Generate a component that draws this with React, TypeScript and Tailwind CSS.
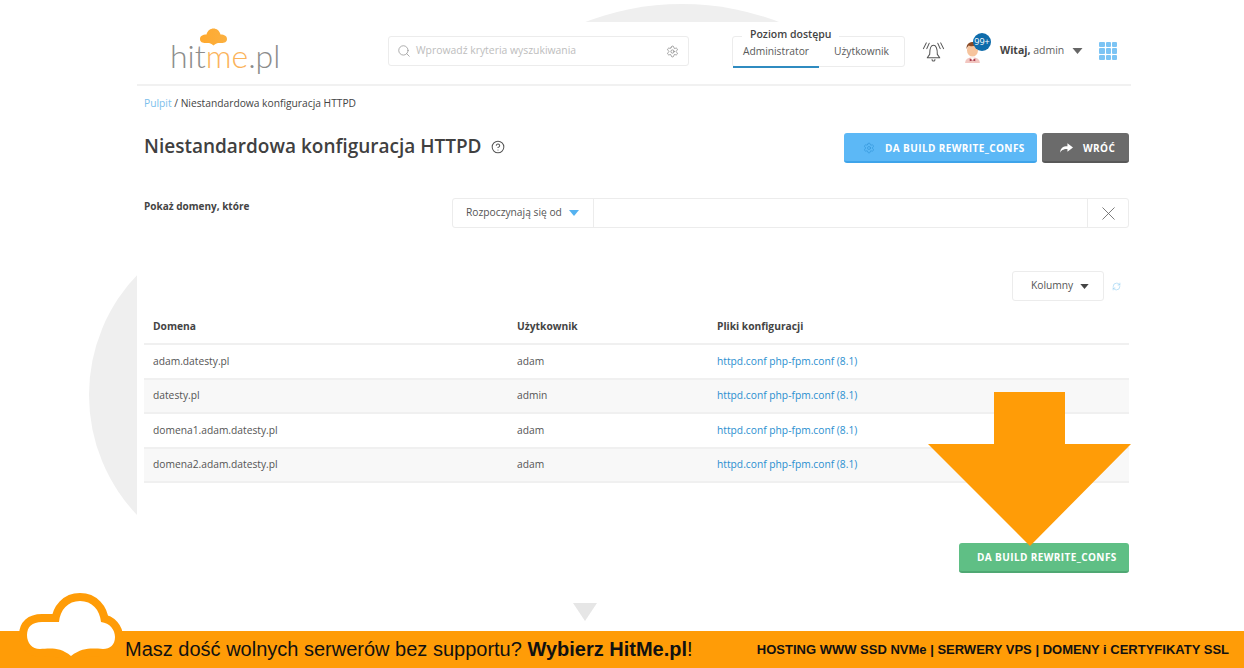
import { Search, Settings, X, RefreshCw, HelpCircle } from "lucide-react";

const rows = [
  { domain: "adam.datesty.pl", user: "adam" },
  { domain: "datesty.pl", user: "admin" },
  { domain: "domena1.adam.datesty.pl", user: "adam" },
  { domain: "domena2.adam.datesty.pl", user: "adam" },
];

function Caret({ className }: { className: string }) {
  return (
    <svg viewBox="0 0 10 6" className={className} fill="currentColor">
      <path d="M0 0h10L5 6z" />
    </svg>
  );
}

function Logo() {
  return (
    <div className="relative ml-[35px] w-[112px] h-[50px]">
      <svg viewBox="0 0 28 18" className="absolute left-[27px] top-[2px] w-[29px] h-[18px]">
        <defs>
          <linearGradient id="lg" x1="0" x2="1">
            <stop offset="0" stopColor="#ffa92e" />
            <stop offset="1" stopColor="#fbb040" />
          </linearGradient>
        </defs>
        <path
          d="M0.5 11C0.5 8 3 6.500 7 6.500C8 2.500 11 0.500 14 0.500C17 0.500 20 2.500 21 6.500C25 6.500 27.500 8 27.500 11C27.500 14 25 15 22 15C19 15 17 14.500 14 17.500C11 14.500 9 15 6 15C3 15 0.500 14 0.500 11Z"
          fill="url(#lg)"
        />
      </svg>
      <div className="absolute left-[-2px] top-[10px] text-[32px] leading-[40px] font-['Lato',sans-serif] font-light text-[#8c8c8c] whitespace-nowrap">
        hit<span className="text-[#fbb35a]">me</span>.pl
      </div>
    </div>
  );
}

function Bell() {
  return (
    <svg viewBox="0 0 24 24" className="ml-[17px] w-[23px] h-[23px] text-[#555555]" fill="none" stroke="currentColor" strokeWidth="1.1" strokeLinecap="round" strokeLinejoin="round">
      <path d="M8 15C8 9 9 5.500 12 5.500C15 5.500 16 9 16 15L18.500 18.500H5.500Z" />
      <path d="M10.500 20.500a1.500 1.500 0 0 0 3 0" />
      <path d="M7.500 3.500L5 9" />
      <path d="M4.500 3L1.500 9" />
      <path d="M16.500 3.500L19 9" />
      <path d="M19.500 3L22.500 9" />
    </svg>
  );
}

function Avatar() {
  return (
    <div className="relative w-[22px] h-[28px]">
      <svg viewBox="0 0 20 24" className="absolute left-[1px] top-[4px] w-[19px] h-[22px]">
        <path d="M2 24c0-4 3-6 8-6s8 2 8 6z" fill="#f2c6c0" />
        <path d="M8 18h4l-2 3z" fill="#fff" />
        <path d="M7 19l3 2 3-2 0 3-3-1-3 1z" fill="#a6364a" />
        <ellipse cx="10" cy="10" rx="6" ry="7" fill="#f6c49d" />
        <path d="M3.500 9C3 3 7 1 11 1c4 0 6 3 5.500 8-1-2-2-4-3.500-4-2 1-6 1-7 0-1 1-2 2-2.500 4z" fill="#8a4a24" />
      </svg>
      <div className="absolute left-[11px] top-[-4px] w-[18px] h-[18px] rounded-full bg-[#0f6cab] text-white text-[9px] leading-[18px] text-center">
        99+
      </div>
    </div>
  );
}

function ConfigButton({ bg, edge, children, className }: { bg: string; edge: string; children: React.ReactNode; className: string }) {
  return (
    <button className={`${bg} ${edge} ${className} h-[30px] pt-[2px] rounded-[3px] border-b-2 text-white text-[10px] font-bold tracking-[0.4px] flex items-center`}>
      {children}
    </button>
  );
}

export default function App() {
  return (
    <div className="relative w-[1244px] h-[668px] overflow-hidden bg-white flex flex-col font-['Open_Sans',sans-serif] text-[#4a4a4a]">
      <div className="absolute left-[412px] top-[4px] w-[540px] h-[540px] rounded-full bg-[#efefef]" />
      <div className="absolute left-[89px] top-[221px] w-[348px] h-[348px] rounded-full bg-[#efefef]" />

      <main className="relative ml-[137px] mt-[22px] w-[994px] h-[578px] bg-white">
        <header className="h-[64px] pb-[4px] border-b-2 border-[#f1f1f1] flex items-center">
          <Logo />
          <div className="ml-[104px] w-[301px] h-[30px] rounded-[3px] border border-[#ececec] flex items-center px-[8px] text-[#a9a9a9]">
            <Search className="w-[14px] h-[14px] text-[#8f8f8f]" strokeWidth={1.25} />
            <span className="ml-[5px] text-[10.400px] flex-1 text-[#bdbdbd]">Wprowadź kryteria wyszukiwania</span>
            <Settings className="w-[13px] h-[13px] mr-[1px] text-[#777777]" strokeWidth={1.25} />
          </div>
          <div className="relative ml-[43px] w-[173px] h-[31px] mt-[1px] rounded-[3px] border border-[#ececec] flex text-[10.250px] text-[#5a5a5a]">
            <div className="absolute left-[9px] top-[-11px] px-[8px] bg-white text-[10.500px] leading-[16px] font-semibold text-[#444444]">
              Poziom dostępu
            </div>
            <div className="w-[86px] h-[31px] border-b-2 border-[#2f8bc0] flex items-center justify-center pt-[1px]">Administrator</div>
            <div className="flex-1 flex items-center justify-center pt-[1px]">Użytkownik</div>
          </div>
          <Bell />
          <div className="ml-[17px]">
            <Avatar />
          </div>
          <div className="ml-[16px] text-[10.500px] whitespace-nowrap text-[#5f5f5f]">
            <b className="text-[#444444]">Witaj,</b> admin
          </div>
          <Caret className="ml-[8px] w-[11px] h-[6px] text-[#666666]" />
          <div className="ml-[16px] w-[18px] h-[18px] grid grid-cols-3 gap-[1px]">
            {Array.from({ length: 9 }).map((_, i) => (
              <div key={i} className="bg-[#7cc4f4] rounded-[1px]" />
            ))}
          </div>
        </header>

        <div className="pl-[7px] pr-[2px]">
          <div className="mt-[9px] text-[10.250px] leading-[16px] text-[#444444]">
            <span className="text-[#7cc0ec]">Pulpit</span> / Niestandardowa konfiguracja HTTPD
          </div>

          <div className="mt-[22px] h-[30px] flex items-center">
            <h1 className="text-[19px] font-semibold text-[#404040] mt-[-4px] whitespace-nowrap">Niestandardowa konfiguracja HTTPD</h1>
            <HelpCircle className="ml-[9px] mt-[-2px] w-[14px] h-[14px] text-[#555555]" strokeWidth={1.75} />
            <ConfigButton bg="bg-[#5cb8f6]" edge="border-[#3fa4ea]" className="ml-auto w-[193px] pl-[19px]">
              <Settings className="w-[12px] h-[12px] mr-[10px] text-[#2f93d8]" strokeWidth={1.25} />
              DA BUILD REWRITE_CONFS
            </ConfigButton>
            <ConfigButton bg="bg-[#6b6b6b]" edge="border-[#585858]" className="ml-[5px] w-[87px] pl-[18px]">
              <svg viewBox="0 0 14 10" className="w-[13px] h-[10px] mr-[10px]" fill="white">
                <path d="M8 0l6 4.500-6 4.500V6C5 6 2 6.500 0 10 0.500 5 3 3 8 3z" />
              </svg>
              WRÓĆ
            </ConfigButton>
          </div>

          <div className="mt-[35px] h-[30px] flex items-start">
            <div className="mt-[1px] w-[308px] text-[10px] font-bold text-[#444444]">Pokaż domeny, które</div>
            <div className="flex-1 h-[30px] rounded-[3px] border border-[#ececec] flex text-[10.250px] text-[#555555]">
              <div className="w-[141px] border-r border-[#ececec] flex items-center pl-[13px]">
                Rozpoczynają się od
                <Caret className="ml-[7px] w-[10px] h-[6px] text-[#55b2f0]" />
              </div>
              <div className="flex-1" />
              <div className="w-[41px] border-l border-[#ececec] flex items-center justify-center">
                <X className="w-[23px] h-[23px] text-[#666666]" strokeWidth={0.9} />
              </div>
            </div>
          </div>

          <div className="mt-[43px] flex items-center justify-end">
            <div className="w-[92px] h-[30px] rounded-[3px] border border-[#ececec] flex items-center pl-[18px] text-[10.250px] text-[#555555]">
              Kolumny
              <Caret className="ml-[7px] w-[9px] h-[5px] text-[#444444]" />
            </div>
            <RefreshCw className="ml-[8px] mr-[8px] w-[9px] h-[9px] text-[#8ccbf0]" strokeWidth={1.5} />
          </div>

          <table className="mt-[9px] w-[985px] table-fixed text-[10.250px] text-[#555555]">
            <thead>
              <tr className="h-[34px] border-b-2 border-[#f0f0f0] text-left font-bold text-[#444444]">
                <th className="w-[364px] pl-[9px] font-bold">Domena</th>
                <th className="w-[200px] pl-[9px] font-bold">Użytkownik</th>
                <th className="pl-[9px] font-bold">Pliki konfiguracji</th>
              </tr>
            </thead>
            <tbody>
              {rows.map((row, i) => (
                <tr key={row.domain} className={`h-[34.500px] border-b-2 border-[#f0f0f0] ${i % 2 === 1 ? "bg-[#f8f8f8]" : ""}`}>
                  <td className="pl-[9px]">{row.domain}</td>
                  <td className="pl-[9px]">{row.user}</td>
                  <td className="pl-[9px] text-[#2b8fd0]">httpd.conf php-fpm.conf (8.1)</td>
                </tr>
              ))}
            </tbody>
          </table>

          <div className="mt-[60px] flex justify-end">
            <button className="w-[170px] h-[30px] pt-[1px] rounded-[3px] bg-[#5fbf85] border-b-2 border-[#4fa873] pl-[18px] text-left text-white text-[10px] font-bold tracking-[0.4px]">
              DA BUILD REWRITE_CONFS
            </button>
          </div>
        </div>
      </main>

      {/* orange callout arrow */}
      <svg viewBox="0 0 203 154" className="absolute left-[928px] top-[392px] w-[203px] h-[154px]">
        <path d="M66 0h71v52h66L102 154 0 52h66z" fill="#ff9c07" />
      </svg>

      <div className="absolute left-[573px] top-[603px] w-[24px] h-[18px] bg-[#e6e6e6] [clip-path:polygon(0_0,100%_0,50%_100%)]" />

      <svg viewBox="0 0 107 66" className="absolute left-[18px] top-[592px] w-[107px] h-[66px] z-10">
        <path
          d="M9 43C9 35 14 30 24 30H41C42 18 50 9 62 9C74 9 82 18 83 30C92 31 97 38 97 45C97 53 92 57 85 57C77 57 66 54 53 64C41 54 30 57 22 57C14 57 9 51 9 43Z"
          fill="white"
          stroke="#ff9c07"
          strokeWidth="16"
          strokeLinejoin="round"
          paintOrder="stroke"
        />
      </svg>

      <footer className="mt-auto h-[37px] pb-[1px] bg-[#ff9c07] flex items-center pl-[125px] pr-[15px] font-['Liberation_Sans',sans-serif] text-[#111111] whitespace-nowrap">
        <span className="text-[20px]">
          Masz dość wolnych serwerów bez supportu? <b>Wybierz HitMe.pl</b>!
        </span>
        <span className="ml-auto mt-[1px] text-[13px] font-bold">HOSTING WWW SSD NVMe | SERWERY VPS | DOMENY i CERTYFIKATY SSL</span>
      </footer>
    </div>
  );
}
